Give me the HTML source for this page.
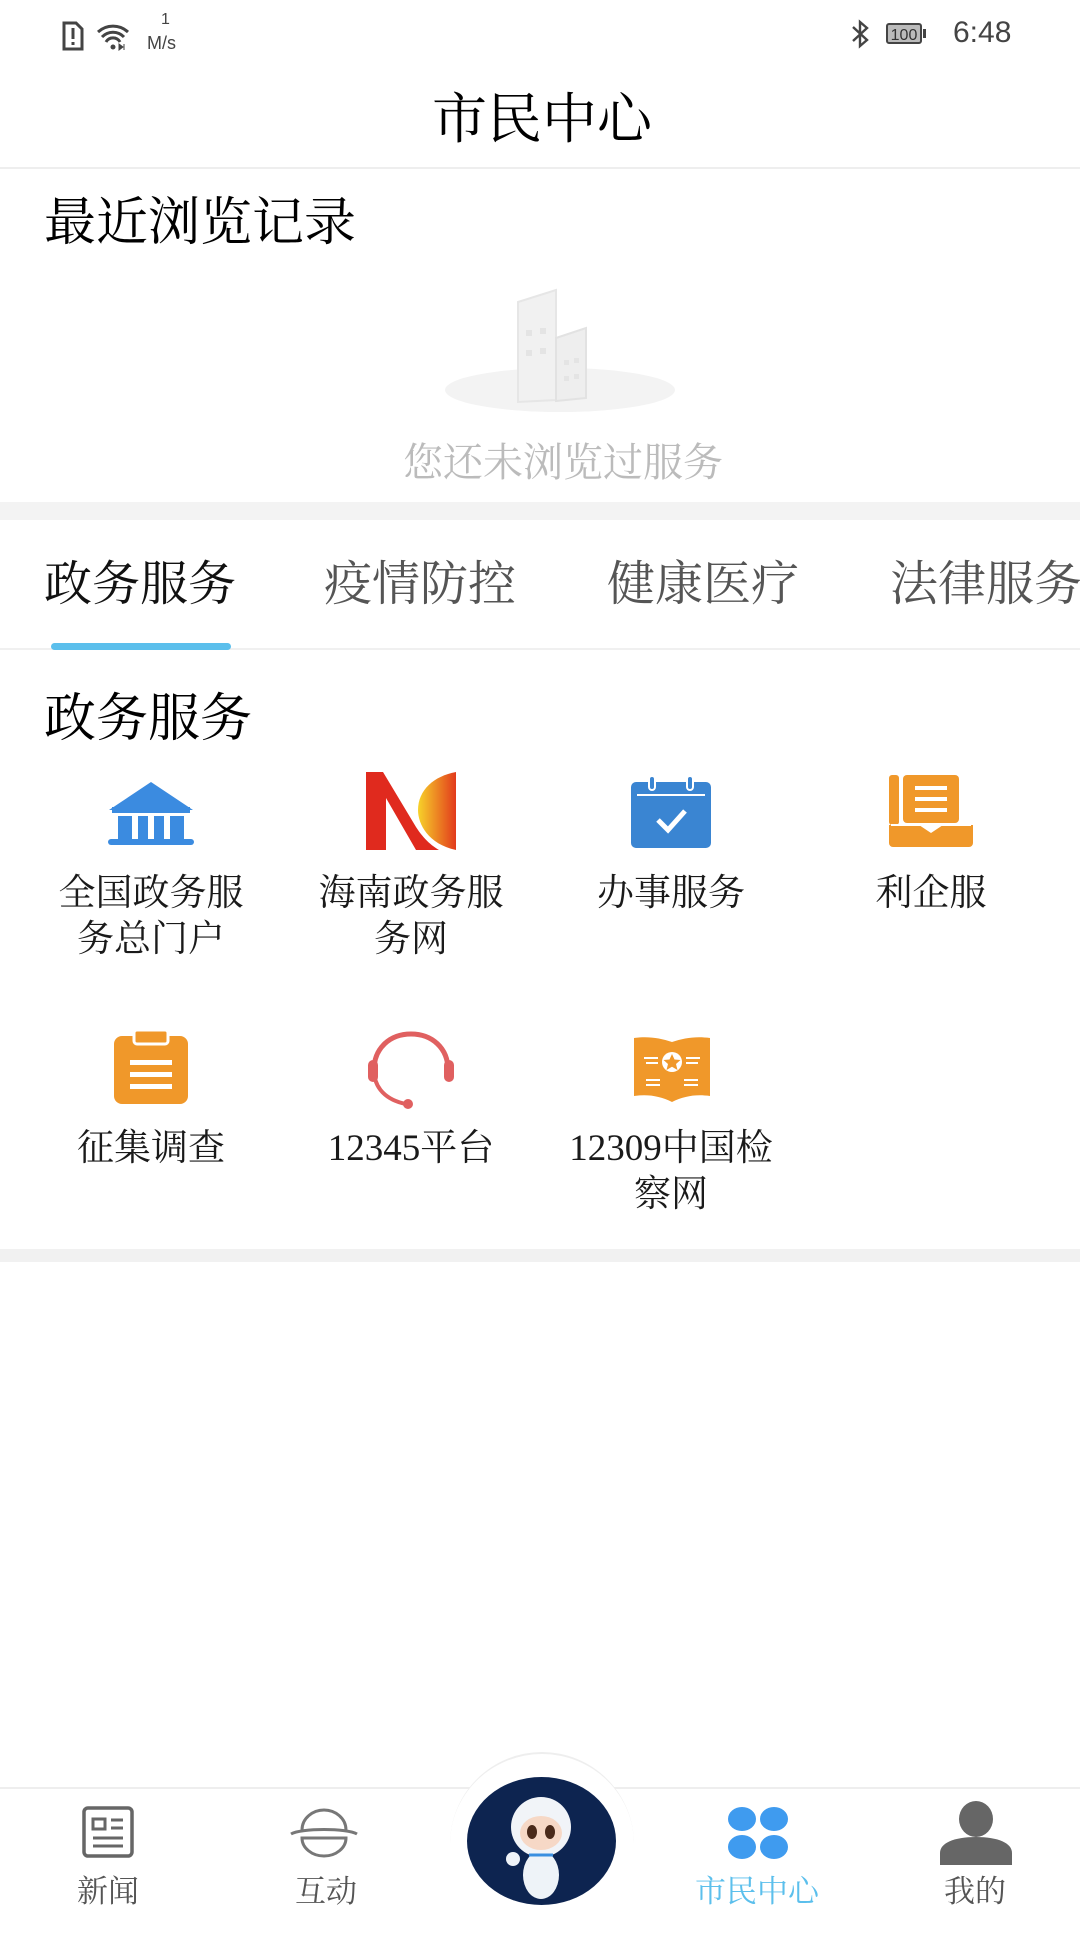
<!DOCTYPE html>
<html><head><meta charset="utf-8">
<style>
*{margin:0;padding:0;box-sizing:border-box}
body{width:1080px;height:1920px;background:#fff;position:relative;overflow:hidden;font-family:"Liberation Serif","Noto Serif CJK SC",serif;color:#222}
.abs{position:absolute}
.t{white-space:nowrap;line-height:1}
.lbl{position:absolute;width:280px;text-align:center;font-size:37px;line-height:46px;color:#1a1a1a}
</style></head><body>
<!-- status bar -->
<svg class="abs" style="left:60px;top:20px" width="130" height="36" viewBox="0 0 130 36">
 <path d="M4 3h12l6 6v20H4z" fill="none" stroke="#444" stroke-width="3"/>
 <rect x="11.5" y="8" width="3" height="11" fill="#444"/><rect x="11.5" y="22" width="3" height="3" fill="#444"/>
 <path d="M38 12a22 22 0 0 1 30 0M42 17a15 15 0 0 1 22 0M46 22a8 8 0 0 1 14 0" fill="none" stroke="#444" stroke-width="3"/>
 <circle cx="53" cy="27" r="2.5" fill="#444"/><path d="M59 24l4 3-4 3zM64 24v6" fill="#444" stroke="#444"/>
</svg>
<div class="abs t" style="left:161px;top:12px;font-family:'Liberation Sans',sans-serif;font-size:16px;color:#444">1</div>
<div class="abs t" style="left:147px;top:34px;font-family:'Liberation Sans',sans-serif;font-size:18px;color:#444">M/s</div>
<svg class="abs" style="left:850px;top:18px" width="90" height="32" viewBox="0 0 90 32">
 <path d="M3 9l14 13-7 6V4l7 6L3 23" fill="none" stroke="#444" stroke-width="2.4"/>
 <rect x="37" y="6" width="34" height="19" rx="2" fill="#bbb" stroke="#444" stroke-width="2"/>
 <rect x="73" y="11" width="3" height="9" fill="#444"/>
 <text x="54" y="22" font-size="16" text-anchor="middle" font-family="Liberation Sans" fill="#333">100</text>
</svg>
<div class="abs t" style="left:953px;top:18px;font-family:'Liberation Sans',sans-serif;font-size:30px;color:#444">6:48</div>

<!-- title -->
<div class="abs t" style="left:0;width:1084px;text-align:center;top:92px;font-size:55px;color:#000">市民中心</div>
<div class="abs" style="left:0;top:167px;width:1080px;height:2px;background:#eee"></div>

<div class="abs t" style="left:44px;top:198px;font-size:52px;color:#000">最近浏览记录</div>
<!-- illustration -->
<svg class="abs" style="left:440px;top:280px" width="260" height="140" viewBox="0 0 260 140">
 <ellipse cx="120" cy="110" rx="115" ry="22" fill="#f3f3f3"/>
 <path d="M78 22l38-12v110l-38 2z" fill="#f1f1f1" stroke="#e6e6e6" stroke-width="2"/>
 <path d="M116 58l30-10v70l-30 3z" fill="#eee" stroke="#e2e2e2" stroke-width="2"/>
 <g fill="#e4e4e4"><rect x="86" y="50" width="6" height="6"/><rect x="100" y="48" width="6" height="6"/><rect x="86" y="70" width="6" height="6"/><rect x="100" y="68" width="6" height="6"/><rect x="124" y="80" width="5" height="5"/><rect x="134" y="78" width="5" height="5"/><rect x="124" y="96" width="5" height="5"/><rect x="134" y="94" width="5" height="5"/></g>
</svg>
<div class="abs t" style="left:0;width:1126px;text-align:center;top:443px;font-size:40px;color:#bbb">您还未浏览过服务</div>
<div class="abs" style="left:0;top:502px;width:1080px;height:18px;background:#f3f3f3"></div>

<!-- tabs -->
<div class="abs t" style="left:44px;top:561px;font-size:48px;color:#111">政务服务</div>
<div class="abs t" style="left:324px;top:561px;font-size:48px;color:#555">疫情防控</div>
<div class="abs t" style="left:607px;top:561px;font-size:48px;color:#555">健康医疗</div>
<div class="abs t" style="left:890px;top:561px;font-size:48px;color:#555">法律服务</div>
<div class="abs" style="left:0;top:648px;width:1080px;height:2px;background:#f0f0f0"></div>
<div class="abs" style="left:51px;top:643px;width:180px;height:7px;border-radius:4px;background:#5bbfec"></div>

<div class="abs t" style="left:44px;top:694px;font-size:52px;color:#000">政务服务</div>

<!-- row1 icons -->
<svg class="abs" style="left:108px;top:780px" width="86" height="66" viewBox="0 0 86 66">
 <path d="M43 2L1 30h84z" fill="#3b8be0"/><rect x="4" y="27" width="78" height="6" fill="#3b8be0"/>
 <rect x="10" y="36" width="14" height="24" fill="#3b8be0"/><rect x="30" y="36" width="10" height="24" fill="#3b8be0"/><rect x="46" y="36" width="10" height="24" fill="#3b8be0"/><rect x="62" y="36" width="14" height="24" fill="#3b8be0"/>
 <rect x="0" y="59" width="86" height="6" rx="3" fill="#3b8be0"/>
</svg>
<svg class="abs" style="left:366px;top:772px" width="92" height="78" viewBox="0 0 92 78">
 <defs><linearGradient id="g1" x1="0" x2="1"><stop offset="0" stop-color="#f7d22a"/><stop offset="1" stop-color="#e23a1c"/></linearGradient></defs>
 <path d="M0 0h17l30 50c8 14 16 22 26 28H50L20 26V78H0z" fill="#e02a1e"/>
 <path d="M90 0v78c-28-6-38-26-38-40C52 18 68 4 90 0z" fill="url(#g1)"/>
</svg>
<svg class="abs" style="left:631px;top:776px" width="80" height="72" viewBox="0 0 80 72">
 <rect x="0" y="6" width="80" height="66" rx="5" fill="#3a85d2"/>
 <rect x="6" y="18" width="68" height="2" fill="#fff"/>
 <rect x="18" y="0" width="6" height="14" rx="3" fill="#3a85d2" stroke="#fff" stroke-width="2"/><rect x="56" y="0" width="6" height="14" rx="3" fill="#3a85d2" stroke="#fff" stroke-width="2"/>
 <path d="M27 44l10 10 17-19" fill="none" stroke="#fff" stroke-width="5"/>
</svg>
<svg class="abs" style="left:889px;top:775px" width="84" height="72" viewBox="0 0 84 72">
 <rect x="0" y="0" width="10" height="50" rx="3" fill="#f0982a"/>
 <rect x="14" y="0" width="56" height="48" rx="4" fill="#f0982a"/>
 <rect x="26" y="11" width="32" height="4" fill="#fff"/><rect x="26" y="22" width="32" height="4" fill="#fff"/><rect x="26" y="33" width="32" height="4" fill="#fff"/>
 <path d="M0 50h30l12 8 12-8h30v18a4 4 0 0 1-4 4H4a4 4 0 0 1-4-4z" fill="#f0982a"/>
 <path d="M2 50h80" stroke="#fff" stroke-width="2"/>
</svg>
<div class="lbl" style="left:11px;top:871px">全国政务服<br>务总门户</div>
<div class="lbl" style="left:271px;top:871px">海南政务服<br>务网</div>
<div class="lbl" style="left:531px;top:871px">办事服务</div>
<div class="lbl" style="left:791px;top:871px">利企服</div>

<!-- row2 icons -->
<svg class="abs" style="left:114px;top:1030px" width="74" height="74" viewBox="0 0 74 74">
 <rect x="0" y="6" width="74" height="68" rx="8" fill="#f0982a"/>
 <rect x="20" y="0" width="34" height="14" rx="3" fill="#f0982a" stroke="#fff" stroke-width="3"/>
 <rect x="16" y="30" width="42" height="5" fill="#fff"/><rect x="16" y="42" width="42" height="5" fill="#fff"/><rect x="16" y="54" width="42" height="5" fill="#fff"/>
</svg>
<svg class="abs" style="left:368px;top:1030px" width="90" height="80" viewBox="0 0 90 80">
 <path d="M6 40C6 18 22 4 43 4s37 14 37 36" fill="none" stroke="#e06060" stroke-width="5"/>
 <path d="M6 40c0 18 12 30 32 34" fill="none" stroke="#e06060" stroke-width="4"/>
 <rect x="0" y="30" width="10" height="22" rx="5" fill="#e06060"/><rect x="76" y="30" width="10" height="22" rx="5" fill="#e06060"/>
 <circle cx="40" cy="74" r="5" fill="#e06060"/>
</svg>
<svg class="abs" style="left:634px;top:1036px" width="76" height="66" viewBox="0 0 76 66">
 <path d="M0 2c14-2 26 0 38 4 12-4 24-6 38-4v58c-14-2-26 0-38 6-12-6-24-8-38-6z" fill="#f0982a"/>
 <circle cx="38" cy="26" r="10" fill="#fff"/><path d="M38 18l2.5 5.5 6 .5-4.5 4 1.5 6-5.5-3.2-5.5 3.2 1.5-6-4.5-4 6-.5z" fill="#f0982a"/>
 <path d="M10 22h14M12 27h12M52 22h14M52 27h12M12 44h14M12 49h14M50 44h14M50 49h14" stroke="#fff" stroke-width="2"/>
</svg>
<div class="lbl" style="left:11px;top:1126px">征集调查</div>
<div class="lbl" style="left:271px;top:1126px">12345平台</div>
<div class="lbl" style="left:531px;top:1126px">12309中国检<br>察网</div>

<div class="abs" style="left:0;top:1249px;width:1080px;height:13px;background:#f1f1f1"></div>

<!-- bottom nav -->
<div class="abs" style="left:0;top:1787px;width:1080px;height:2px;background:#eee"></div>
<div class="abs" style="left:450px;top:1752px;width:184px;height:184px;border-radius:50%;background:#fff;border-top:2px solid #eee"></div>
<div class="abs" style="left:467px;top:1777px;width:149px;height:128px;border-radius:50%;background:#0d2450;overflow:hidden">
 <svg width="149" height="128" viewBox="0 0 149 128">
  <ellipse cx="74" cy="98" rx="18" ry="24" fill="#eef3f8"/>
  <ellipse cx="74" cy="50" rx="30" ry="30" fill="#f1f4f8"/>
  <ellipse cx="74" cy="56" rx="21" ry="17" fill="#f6d8c6"/>
  <ellipse cx="65" cy="55" rx="5" ry="7" fill="#4a2a1a"/><ellipse cx="83" cy="55" rx="5" ry="7" fill="#4a2a1a"/>
  <circle cx="46" cy="82" r="7" fill="#eef3f8"/>
  <path d="M62 78h24" stroke="#3a8fe0" stroke-width="3"/>
 </svg>
</div>
<svg class="abs" style="left:82px;top:1806px" width="52" height="52" viewBox="0 0 52 52">
 <rect x="2" y="2" width="48" height="48" rx="4" fill="none" stroke="#666" stroke-width="3.5"/>
 <rect x="11" y="13" width="12" height="10" fill="none" stroke="#666" stroke-width="3"/>
 <path d="M29 14h12M29 22h12M11 32h30M11 40h30" stroke="#666" stroke-width="3"/>
</svg>
<svg class="abs" style="left:289px;top:1808px" width="70" height="50" viewBox="0 0 70 50">
 <path d="M13 22C13 10 24 2 35 2s22 8 22 20" fill="none" stroke="#777" stroke-width="3"/>
 <path d="M2 26c10-6 56-6 66 0" fill="none" stroke="#777" stroke-width="3"/>
 <path d="M13 30c0 10 10 18 22 18s22-8 22-18z" fill="none" stroke="#777" stroke-width="3"/>
</svg>
<svg class="abs" style="left:727px;top:1806px" width="62" height="54" viewBox="0 0 62 54">
 <g fill="#3f9bef"><ellipse cx="15" cy="13" rx="14" ry="12"/><ellipse cx="47" cy="13" rx="14" ry="12"/><ellipse cx="15" cy="41" rx="14" ry="12"/><ellipse cx="47" cy="41" rx="14" ry="12"/></g>
</svg>
<svg class="abs" style="left:938px;top:1801px" width="76" height="64" viewBox="0 0 76 64">
 <ellipse cx="38" cy="18" rx="17" ry="18" fill="#666"/>
 <path d="M2 64V52c0-10 14-16 36-16s36 6 36 16v12z" fill="#666"/>
</svg>
<div class="abs t" style="left:48px;width:120px;text-align:center;top:1876px;font-size:31px;color:#555">新闻</div>
<div class="abs t" style="left:266px;width:120px;text-align:center;top:1876px;font-size:31px;color:#555">互动</div>
<div class="abs t" style="left:667px;width:180px;text-align:center;top:1876px;font-size:31px;color:#5bbfec">市民中心</div>
<div class="abs t" style="left:915px;width:120px;text-align:center;top:1876px;font-size:31px;color:#555">我的</div>
</body></html>
